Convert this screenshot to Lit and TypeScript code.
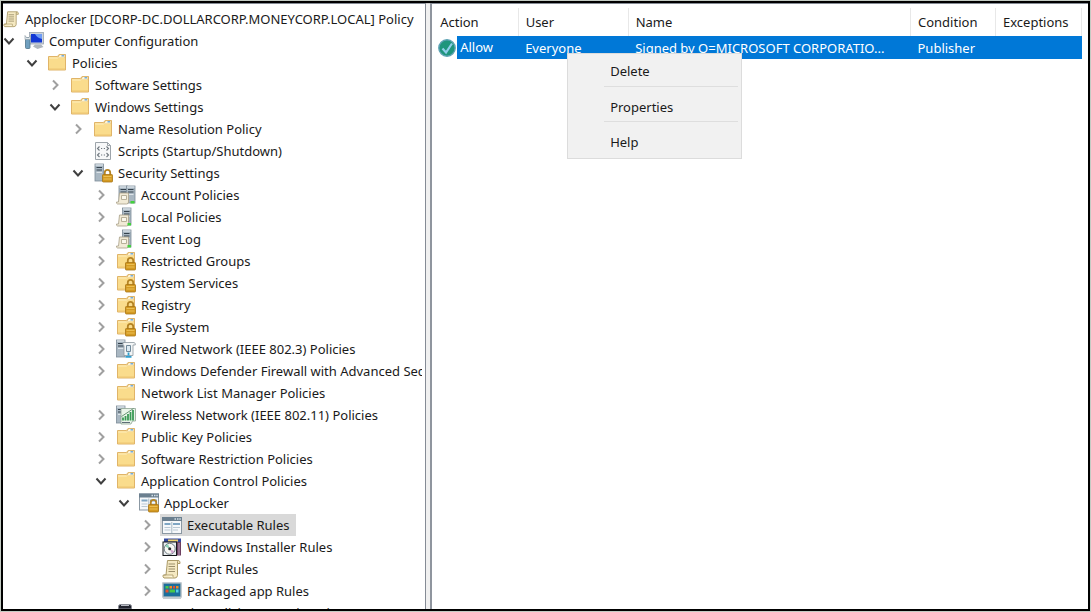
import { LitElement, html, svg, css, nothing } from "lit";
import { customElement, property } from "lit/decorators.js";

type IconName =
  | "scroll" | "computer" | "folder" | "script" | "serverLock" | "servers" | "server"
  | "folderLock" | "wired" | "wireless" | "appLock" | "window" | "installer" | "package" | "ipsec";

interface TreeRow {
  level: number;
  label: string;
  icon: IconName;
  open?: boolean;
  selected?: boolean;
}

const ROWS: TreeRow[] = [
  { level: 0, label: "Applocker [DCORP-DC.DOLLARCORP.MONEYCORP.LOCAL] Policy", icon: "scroll" },
  { level: 1, label: "Computer Configuration", icon: "computer", open: true },
  { level: 2, label: "Policies", icon: "folder", open: true },
  { level: 3, label: "Software Settings", icon: "folder", open: false },
  { level: 3, label: "Windows Settings", icon: "folder", open: true },
  { level: 4, label: "Name Resolution Policy", icon: "folder", open: false },
  { level: 4, label: "Scripts (Startup/Shutdown)", icon: "script" },
  { level: 4, label: "Security Settings", icon: "serverLock", open: true },
  { level: 5, label: "Account Policies", icon: "servers", open: false },
  { level: 5, label: "Local Policies", icon: "server", open: false },
  { level: 5, label: "Event Log", icon: "server", open: false },
  { level: 5, label: "Restricted Groups", icon: "folderLock", open: false },
  { level: 5, label: "System Services", icon: "folderLock", open: false },
  { level: 5, label: "Registry", icon: "folderLock", open: false },
  { level: 5, label: "File System", icon: "folderLock", open: false },
  { level: 5, label: "Wired Network (IEEE 802.3) Policies", icon: "wired", open: false },
  { level: 5, label: "Windows Defender Firewall with Advanced Security", icon: "folder", open: false },
  { level: 5, label: "Network List Manager Policies", icon: "folder" },
  { level: 5, label: "Wireless Network (IEEE 802.11) Policies", icon: "wireless", open: false },
  { level: 5, label: "Public Key Policies", icon: "folder", open: false },
  { level: 5, label: "Software Restriction Policies", icon: "folder", open: false },
  { level: 5, label: "Application Control Policies", icon: "folder", open: true },
  { level: 6, label: "AppLocker", icon: "appLock", open: true },
  { level: 7, label: "Executable Rules", icon: "window", open: false, selected: true },
  { level: 7, label: "Windows Installer Rules", icon: "installer", open: false },
  { level: 7, label: "Script Rules", icon: "scroll", open: false },
  { level: 7, label: "Packaged app Rules", icon: "package", open: false },
  { level: 5, label: "IP Security Policies on Active Directory", icon: "ipsec" },
];

const folder = svg`
  <path d="M1.500 3.500h9l1.500-2h6.500v15.500h-17z" fill="#fadc8c" stroke="#e0b468"/>
  <path d="M12.500 1.500h5.500v3h-7z" fill="#fff6dc" stroke="#d9ae62" stroke-width=".8"/>
  <path d="M14.500 2.200h2.500v1.400h-2.500z" fill="#4f9be0"/>
  <path d="M2.200 5h8.300l1.300-.8h5.900" fill="none" stroke="#fdedbd"/>
  <path d="M2 15.500h16v1h-16z" fill="#efc673"/>`;
const lock = svg`
  <path d="M11.800 12v-2.500a2.700 2.700 0 0 1 5.400 0v2.500" fill="none" stroke="#b58425" stroke-width="1.800"/>
  <rect x="9.500" y="11.500" width="10" height="7.500" rx=".8" fill="#d49a22" stroke="#a87514" stroke-width=".8"/>
  <path d="M10.500 13.500h8M10.500 16h8" stroke="#edc35a" stroke-width=".9"/>`;
const tower = (x: number) => svg`
  <rect x=${x + 0.5} y="1" width="8.500" height="17" fill="#a9b7c2" stroke="#7d8c98" stroke-width=".8"/>
  <path d=${`M${x + 1} 2h7.500`} stroke="#e3eaef" stroke-width="1.200"/>
  <path d=${`M${x + 2} 4.500h5.500M${x + 2} 7h5.500`} stroke="#35424d" stroke-width="1.200"/>
  <path d=${`M${x + 2} 9.500h5.500`} stroke="#dde4e9"/>`;
const page = svg`
  <path d="M3.500 8h9v9q0 2-2 2h-9q-1.300-.3-1-2h2z" fill="#f1ead6" stroke="#a89f88" stroke-width=".8"/>
  <path d="M5.500 10.500h5v4h-5z" fill="#faf7ec" stroke="#b0a891" stroke-width=".9"/>`;
const appWindow = svg`
  <rect x=".5" y="2.500" width="19" height="16" fill="#f6f8fa" stroke="#8b98a3"/>
  <rect x="0" y="2" width="20" height="4" fill="#6b7f8f"/>
  <path d="M12.500 4h1.500M15 4h1.500M17.300 4h1.500" stroke="#d4dfe7" stroke-width="1.400"/>
  <path d="M2.500 8h6v2h-6z" fill="#7fa6c4"/>
  <path d="M11 8h7v2h-7z" fill="#7fa6c4"/>
  <path d="M2.500 12.500h6M2.500 15h6M11 12.500h7M11 15h5" stroke="#b9c8d4"/>
  <path d="M9.800 7v11" stroke="#a9b8c4"/>`;

const ICONS: Record<IconName, unknown> = {
  folder,
  folderLock: svg`${folder}${lock}`,
  scroll: svg`
    <path d="M5.500 1.500h11q2 .5 1.500 3h-2.500v12q-.5 2.500-2.500 2.500h-11q-1.500-1-.8-3h2.800z" fill="#f5e9c2" stroke="#ab9a68"/>
    <path d="M2 16h9v2.500" fill="#fff8dc" stroke="#a79562" stroke-width=".8"/>
    <path d="M6.500 5h6.500M6.500 7.500h6.500M6.500 10h6.500M6.500 12.500h6.500" stroke="#9c906c"/>
    <path d="M15.500 4.500q-.5-2 1-3" fill="none" stroke="#a79562"/>`,
  computer: svg`
    <rect x="5.500" y="1.500" width="14" height="11.500" fill="#ccd3da" stroke="#98a3af" stroke-width=".8"/>
    <path d="M7 3h11v8.500h-11z" fill="#1237d4"/>
    <path d="M11 3h7v5q-5-1-7-5z" fill="#6e9cf5"/>
    <path d="M9 15.500l2-2h6l2.500 2.500-6 2z" fill="#aeb6bd"/>
    <rect x="1.500" y="6.500" width="4.500" height="11" rx="1" fill="#6f9fbf" stroke="#4e7389" stroke-width=".8"/>
    <path d="M1 4.500l1.500 2h2.500l1.500-2v4h-5.500z" fill="#dfe6ea" stroke="#8b98a1" stroke-width=".6"/>`,
  script: svg`
    <path d="M2.500 1.500h12l3 3v14h-15z" fill="#f7f8f9" stroke="#9da4aa"/>
    <path d="M14.500 1.500v3h3" fill="none" stroke="#9da4aa"/>
    <path d="M6.500 5.500L4.500 7.500l2 2M13.500 5.500l2 2-2 2M8 7.500h1.200M10.800 7.500H12M6.500 12l-2 2 2 2M13.500 12l2 2-2 2M8 14h1.200M10.800 14H12" fill="none" stroke="#6f777e" stroke-width="1.100"/>`,
  serverLock: svg`${tower(1.5)}${lock}`,
  servers: svg`${tower(2.5)}${tower(10)}${page}<path d="M14.500 16h4v2.500h-4z" fill="#43d13c"/>`,
  server: svg`${tower(6)}${page}<path d="M11.500 16h3.500v2.500h-3.500z" fill="#43d13c"/>`,
  wired: svg`${tower(0)}
    <path d="M7 3.500h11q1.800.5 1.300 2.500h-2.300v10.500h-9v-10q-1.800-.5-1-3z" fill="#f2f5f6" stroke="#8d989f" stroke-width=".8"/>
    <path d="M10.500 6.500h4v6h-4z" fill="#dceaf2" stroke="#70899a"/>
    <path d="M12.500 13.500v3M9.500 17.800h6" stroke="#2fa0d0" stroke-width="1.800"/>`,
  wireless: svg`${tower(0)}
    <path d="M5 3.500h14.500v12.500h-3l-1.500 3h-10z" fill="#e9f4e9" stroke="#8ea393" stroke-width=".8"/>
    <path d="M7 15.500v-3M9.500 15.500v-4.500M12 15.500v-6.500M14.500 15.500v-8.500M17 15.500v-10.500" stroke="#3a9a55" stroke-width="1.800"/>
    <path d="M5.500 11.500l12-8" stroke="#5a8b68" stroke-width=".9"/>
    <path d="M6 17.500h8" stroke="#5d6d75"/>`,
  window: appWindow,
  appLock: svg`<g transform="translate(0 -1.500)">${appWindow}</g>${lock}`,
  installer: svg`
    <path d="M2 1.500h17v5h-17z" fill="#33479c"/>
    <path d="M6 2.500h10v2h-10z" fill="#f0d36b"/>
    <path d="M13 5h6v13.500h-6z" fill="#6c3f60"/>
    <path d="M17 6v12" stroke="#c0a7c4"/>
    <rect x="1" y="5" width="13.500" height="13.500" fill="#e9edf0" stroke="#15181b"/>
    <circle cx="7.700" cy="11.800" r="5.500" fill="#f8f8f4" stroke="#6f7c83"/>
    <path d="M7.700 11.800L3.200 9.500A5 5 0 0 1 6 7z" fill="#8bd2b5"/>
    <path d="M7.700 11.800l4.600 2.400a5 5 0 0 1-2.700 2.400z" fill="#d1a9d0"/>
    <circle cx="7.700" cy="11.800" r="1.500" fill="#2b2f31"/>`,
  package: svg`
    <rect x="1" y="2" width="18" height="14" fill="#1b6f9c" stroke="#a9b5be" stroke-width="1.400"/>
    <path d="M3.500 5h3v2.500h-3z" fill="#48c848"/><path d="M7.500 5h2.500v2.500h-2.500z" fill="#f28a21"/>
    <path d="M11 5h2v2.500h-2z" fill="#e84d2e"/><path d="M14 5h2.500v2.500h-2.500z" fill="#f28a21"/>
    <path d="M3.500 8.500h3v3h-3z" fill="#e45530"/><path d="M7.500 8.500h5.500v3h-5.500z" fill="#48c848"/>
    <path d="M14 8.500h2.500v3h-2.500z" fill="#55d0e8"/><path d="M1 17.500h18" stroke="#c6cdd2"/>`,
  ipsec: svg`
    <path d="M2.500 6v-2.500q0-2 2-2h9q2 0 2 2v2.500z" fill="#23252f" stroke="#8c8f98"/>
    <path d="M5 2.500h8" stroke="#b9bcc4"/>`,
};

@customElement("tree-item")
export class TreeItem extends LitElement {
  @property({ attribute: false }) row!: TreeRow;

  static styles = css`
    :host { display: block; overflow: hidden; }
    .row { display: flex; align-items: center; height: 22px; white-space: nowrap; }
    .toggle {
      flex: none; width: 12px; height: 22px; padding: 0; border: 0; background: none;
      display: grid; place-items: center; color: #a0a0a0;
    }
    .toggle.open { color: #404040; }
    .toggle svg { display: block; width: 12px; height: 12px; }
    .node {
      display: flex; align-items: center; gap: 5px; height: 22px;
      margin-left: 7px; padding: 0 6px 0 2px; color: inherit; text-decoration: none;
    }
    .node.root { margin-left: 0; padding-left: 0; }
    .node.selected { background: #d9d9d9; }
    .icon { flex: none; width: 20px; height: 20px; }
    .root .icon { width: 17px; }
  `;

  render() {
    const { level, label, icon, open, selected } = this.row;
    const chevron = open ? "M1.500 3.500L6 8.500l4.500-5" : "M4 1.500L8.500 6 4 10.500";
    return html`
      <div class="row" style=${`padding-left:${Math.max(level - 1, 0) * 23}px`}>
        ${level === 0
          ? nothing
          : open === undefined
            ? html`<span class="toggle"></span>`
            : html`<button class="toggle ${open ? "open" : ""}" aria-label=${`${open ? "Collapse" : "Expand"} ${label}`}>
                <svg viewBox="0 0 12 12" aria-hidden="true"><path d=${chevron} fill="none" stroke="currentColor" stroke-width="2"/></svg>
              </button>`}
        <a class="node ${level === 0 ? "root" : ""} ${selected ? "selected" : ""}" href="#">
          <svg class="icon" viewBox="0 0 20 20" aria-hidden="true">${ICONS[icon]}</svg>
          <span>${label}</span>
        </a>
      </div>`;
  }
}

@customElement("rule-list")
export class RuleList extends LitElement {
  static styles = css`
    :host { display: block; position: relative; padding: 4px 6px 0 5px; }
    table { width: 100%; border-collapse: collapse; table-layout: fixed; }
    .action { width: 81px; }
    .user { width: 110px; }
    .condition { width: 85px; }
    .exceptions { width: 86px; }
    th { height: 28px; padding: 0 7px; font-weight: 400; text-align: left; border-right: 1px solid #e8e8e8; }
    th:first-child { padding-left: 3px; }
    td { height: 23px; padding: 0 7px; color: #fff; background: #0078d7; white-space: nowrap; }
    td:first-child { padding: 0; background: none; }
    .allow { display: flex; align-items: center; }
    .allow svg { flex: none; width: 20px; height: 20px; }
    .allow span { flex: 1; height: 23px; line-height: 23px; padding-left: 3px; background: #0078d7; }
    .menu {
      position: absolute; left: 135px; top: 49px; width: 175px; padding: 0 3px 2px 36px;
      background: #f1f1f1; border: 1px solid #dcdcdc;
    }
    .menu button {
      display: block; width: 100%; height: 35px; padding: 6px 6px 0; border: 0;
      background: none; font: inherit; color: inherit; text-align: left;
    }
    .menu button:first-child { height: 32px; padding-top: 2px; }
    .menu button + button { border-top: 1px solid #dedede; }
    .menu, .menu button { box-sizing: border-box; }
  `;

  render() {
    return html`
      <table>
        <colgroup>
          <col class="action"><col class="user"><col><col class="condition"><col class="exceptions">
        </colgroup>
        <thead>
          <tr><th>Action</th><th>User</th><th>Name</th><th>Condition</th><th>Exceptions</th></tr>
        </thead>
        <tbody>
          <tr>
            <td><div class="allow">
              <svg viewBox="0 0 20 20" aria-hidden="true">
                <circle cx="10" cy="10" r="8.200" fill="#1f957c" stroke="#5fa3b5" stroke-width="1.400"/>
                <path d="M5.500 10.500l3.500 4 6-9" fill="none" stroke="#8fcdea" stroke-width="2.200"/>
              </svg><span>Allow</span></div></td>
            <td>Everyone</td>
            <td>Signed by O=MICROSOFT CORPORATIO...</td>
            <td>Publisher</td>
            <td></td>
          </tr>
        </tbody>
      </table>
      <div class="menu" role="menu">
        <button role="menuitem">Delete</button>
        <button role="menuitem">Properties</button>
        <button role="menuitem">Help</button>
      </div>`;
  }
}

@customElement("app-root")
export class AppRoot extends LitElement {
  static styles = css`
    :host {
      display: block; box-sizing: border-box; height: 100vh; padding: 1px;
      background: #c3cbc3; color: #1a1a1a; font: 13px/22px "Noto Sans", "Open Sans", sans-serif;
    }
    .frame {
      box-sizing: border-box; height: 100%; display: grid;
      grid-template: minmax(0, 1fr) / 39% 4px minmax(0, 1fr);
      border: 2px solid #000; background: #fff;
    }
    .tree {
      min-width: 0; overflow: hidden; padding: 4px 3px 0 0;
      border-top: 1px solid #858b95; border-right: 1px solid #858b95;
    }
    .splitter { background: #f0f0f0; border-top: 1px solid #c8c8c8; }
    .list { min-width: 0; border-top: 1px solid #858b95; border-left: 2px solid #8f959e; }
  `;

  render() {
    return html`
      <main class="frame">
        <nav class="tree" aria-label="Console tree">
          ${ROWS.map((row) => html`<tree-item .row=${row}></tree-item>`)}
        </nav>
        <div class="splitter"></div>
        <section class="list"><rule-list></rule-list></section>
      </main>`;
  }
}
